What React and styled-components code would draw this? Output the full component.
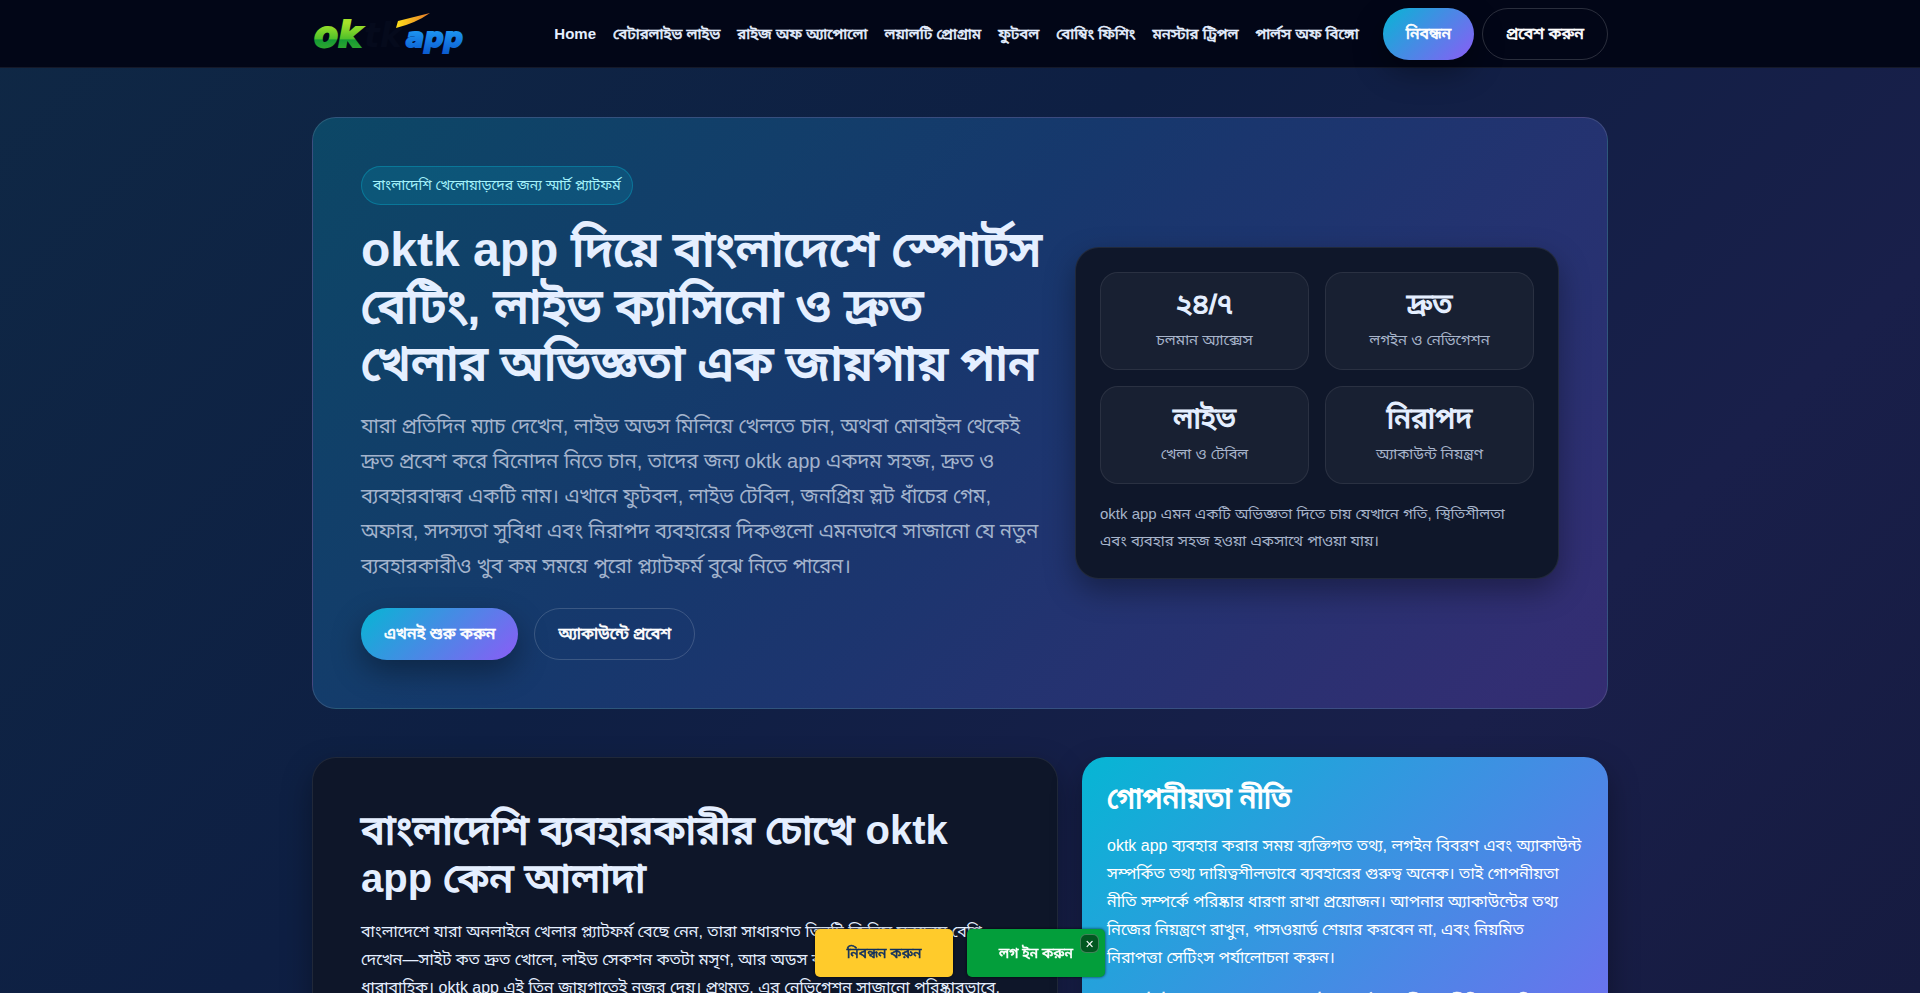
import React, { useState } from 'react'
import styled, { createGlobalStyle, css } from 'styled-components'

const NAV = [
  'বেটারলাইভ লাইভ', 'রাইজ অফ অ্যাপোলো', 'লয়ালটি প্রোগ্রাম',
  'ফুটবল', 'বোম্বিং ফিশিং', 'মনস্টার ট্রিপল', 'পার্লস অফ বিঙ্গো',
]

const STATS = [
  { value: '২৪/৭', label: 'চলমান অ্যাক্সেস' },
  { value: 'দ্রুত', label: 'লগইন ও নেভিগেশন' },
  { value: 'লাইভ', label: 'খেলা ও টেবিল' },
  { value: 'নিরাপদ', label: 'অ্যাকাউন্ট নিয়ন্ত্রণ' },
]

const Logo = () => (
  <svg width="160" height="48" viewBox="0 0 160 48" role="img" aria-label="oktk app">
    <defs>
      <linearGradient id="green" x1="0" y1="0" x2="0" y2="1">
        <stop offset="0.2" stopColor="#a6e32a" />
        <stop offset="0.6" stopColor="#4fc02a" />
        <stop offset="0.62" stopColor="#159a35" />
        <stop offset="1" stopColor="#3fae2a" />
      </linearGradient>
      <linearGradient id="blue" x1="0" y1="0" x2="0" y2="1">
        <stop offset="0.2" stopColor="#1f9bf5" />
        <stop offset="1" stopColor="#0b5cd0" />
      </linearGradient>
      <linearGradient id="gold" x1="0" y1="0" x2="1" y2="0">
        <stop offset="0" stopColor="#ffe11a" />
        <stop offset="1" stopColor="#e8792a" />
      </linearGradient>
    </defs>
    <g fontFamily="'DejaVu Sans', Verdana, sans-serif" fontWeight="bold" fontStyle="italic">
      <text x="2" y="37" fontSize="35" fill="url(#green)" stroke="url(#green)" strokeWidth="2">ok</text>
      <text x="52" y="37" fontSize="33" fill="#050a1c">tk</text>
      <text x="94" y="37" fontSize="27" fill="url(#blue)" stroke="url(#blue)" strokeWidth="2">app</text>
    </g>
    <path d="M86 11 L118 3 Q104 13 84 18 Z" fill="url(#gold)" />
  </svg>
)

const App = () => {
  const [showFloat, setShowFloat] = useState(true)

  return (
    <>
      <GlobalStyle />
      <Header>
        <HeaderInner>
          <LogoLink href="/"><Logo /></LogoLink>
          <Nav>
            <a href="/"><Latin>Home</Latin></a>
            {NAV.map((item) => <a key={item} href="#">{item}</a>)}
          </Nav>
          <HeaderButtons>
            <Button href="#register" $primary>নিবন্ধন</Button>
            <Button href="#login">প্রবেশ করুন</Button>
          </HeaderButtons>
        </HeaderInner>
      </Header>

      <Main>
        <Hero>
          <div>
            <Badge>বাংলাদেশি খেলোয়াড়দের জন্য স্মার্ট প্ল্যাটফর্ম</Badge>
            <HeroTitle><Latin>oktk app</Latin> দিয়ে বাংলাদেশে স্পোর্টস বেটিং, লাইভ ক্যাসিনো ও দ্রুত খেলার অভিজ্ঞতা এক জায়গায় পান</HeroTitle>
            <HeroText>
              যারা প্রতিদিন ম্যাচ দেখেন, লাইভ অডস মিলিয়ে খেলতে চান, অথবা মোবাইল থেকেই দ্রুত প্রবেশ করে বিনোদন নিতে চান, তাদের জন্য oktk app একদম সহজ, দ্রুত ও ব্যবহারবান্ধব একটি নাম। এখানে ফুটবল, লাইভ টেবিল, জনপ্রিয় স্লট ধাঁচের গেম, অফার, সদস্যতা সুবিধা এবং নিরাপদ ব্যবহারের দিকগুলো এমনভাবে সাজানো যে নতুন ব্যবহারকারীও খুব কম সময়ে পুরো প্ল্যাটফর্ম বুঝে নিতে পারেন।
            </HeroText>
            <HeroButtons>
              <Button href="#register" $primary>এখনই শুরু করুন</Button>
              <Button href="#login">অ্যাকাউন্টে প্রবেশ</Button>
            </HeroButtons>
          </div>
          <Panel>
            <StatGrid>
              {STATS.map((s) => (
                <Stat key={s.label}>
                  <strong>{s.value}</strong>
                  <span>{s.label}</span>
                </Stat>
              ))}
            </StatGrid>
            <p>oktk app এমন একটি অভিজ্ঞতা দিতে চায় যেখানে গতি, স্থিতিশীলতা এবং ব্যবহার সহজ হওয়া একসাথে পাওয়া যায়।</p>
          </Panel>
        </Hero>

        <Columns>
          <Article>
            <h2>বাংলাদেশি ব্যবহারকারীর চোখে <Latin>oktk app</Latin> কেন আলাদা</h2>
            <p>
              বাংলাদেশে যারা অনলাইনে খেলার প্ল্যাটফর্ম বেছে নেন, তারা সাধারণত তিনটি জিনিস সবচেয়ে বেশি দেখেন—সাইট কত দ্রুত খোলে, লাইভ সেকশন কতটা মসৃণ, আর অডস বা গেমের তথ্য কতটা ধারাবাহিক। oktk app এই তিন জায়গাতেই নজর দেয়। প্রথমত, এর নেভিগেশন সাজানো পরিষ্কারভাবে, তাই নতুন ব্যবহারকারীও সহজে পথ খুঁজে পান।
            </p>
          </Article>
          <Privacy>
            <h3>গোপনীয়তা নীতি</h3>
            <p>
              oktk app ব্যবহার করার সময় ব্যক্তিগত তথ্য, লগইন বিবরণ এবং অ্যাকাউন্ট সম্পর্কিত তথ্য দায়িত্বশীলভাবে ব্যবহারের গুরুত্ব অনেক। তাই গোপনীয়তা নীতি সম্পর্কে পরিষ্কার ধারণা রাখা প্রয়োজন। আপনার অ্যাকাউন্টের তথ্য নিজের নিয়ন্ত্রণে রাখুন, পাসওয়ার্ড শেয়ার করবেন না, এবং নিয়মিত নিরাপত্তা সেটিংস পর্যালোচনা করুন।
            </p>
            <p>
              <a href="#privacy">অ্যাকাউন্ট ব্যবহারের আগে অবশ্যই সম্পূর্ণ গোপনীয়তা নীতি পড়ে নিন</a>
            </p>
          </Privacy>
        </Columns>
      </Main>

      {showFloat &&
        <FloatBar>
          <FloatLink href="#register" $bg="#ffcb2b" $color="#10305e">নিবন্ধন করুন</FloatLink>
          <FloatLink href="#login" $bg="#039e3b" $color="#fff">লগ ইন করুন</FloatLink>
          <Close type="button" aria-label="বন্ধ করুন" onClick={() => setShowFloat(false)}>✕</Close>
        </FloatBar>}
    </>
  )
}

export default App

// Bengali headings are the regular cut thickened by a stroke, Latin words use the real bold
const bengaliBold = css`
  font-weight: 400;
  -webkit-text-stroke: 0.04em currentColor;
`

const GlobalStyle = createGlobalStyle`
  * {
    box-sizing: border-box;
  }
  body {
    margin: 0;
    overflow: hidden;
    height: 100vh;
    font-family: "Liberation Sans", Arial, "Noto Sans Bengali UI", "Noto Sans Bengali", sans-serif;
    font-size: 16px;
    line-height: 28px;
    color: #e5efff;
    background: linear-gradient(135deg, #0f2845, #0e1f43 42%, #191f4a 75%, #161b40);
  }
  h1, h2, h3, p {
    margin: 0;
  }
  h1, h2, h3, strong {
    ${bengaliBold}
  }
  a {
    color: inherit;
    text-decoration: none;
  }
`

const Latin = styled.span`
  font-weight: bold;
  -webkit-text-stroke: 0;
`

const Header = styled.header`
  position: relative;
  background: #020617;
  border-bottom: 1px solid rgba(255, 255, 255, 0.08);
`

const HeaderInner = styled.div`
  display: flex;
  align-items: center;
  max-width: 1296px;
  height: 67px;
  margin: 0 auto;
`

const LogoLink = styled.a`
  display: flex;
`

const Nav = styled.nav`
  display: flex;
  gap: 17px;
  margin-left: auto;
  font-size: 15px;
  ${bengaliBold}
  white-space: nowrap;
`

const HeaderButtons = styled.div`
  display: flex;
  gap: 8px;
  margin-left: 24px;
`

const Button = styled.a`
  padding: ${({ $primary }) => $primary ? '12px 23px' : '11px 23px'};
  border: ${({ $primary }) => $primary ? '0' : '1px solid rgba(255, 255, 255, 0.16)'};
  border-radius: 26px;
  background: ${({ $primary }) => $primary ? 'linear-gradient(135deg, #06b6d4, #8b5cf6)' : 'transparent'};
  box-shadow: ${({ $primary }) => $primary ? '0 12px 30px rgba(0, 0, 0, 0.35)' : 'none'};
  color: #fff;
  ${bengaliBold}
  white-space: nowrap;
`

const Main = styled.main`
  display: flex;
  flex-direction: column;
  gap: 48px;
  max-width: 1296px;
  margin: 0 auto;
  padding-top: 49px;
`

const Hero = styled.section`
  display: grid;
  grid-template-columns: minmax(0, 1fr) 484px;
  gap: 32px;
  align-items: center;
  padding: 48px;
  border: 1px solid rgba(255, 255, 255, 0.12);
  border-radius: 24px;
  background: linear-gradient(135deg, rgba(6, 182, 212, 0.24), rgba(59, 130, 246, 0.24), rgba(139, 92, 246, 0.24));
`

const Badge = styled.span`
  display: inline-block;
  padding: 6px 11px;
  border: 1px solid rgba(6, 182, 212, 0.35);
  border-radius: 20px;
  background: rgba(6, 182, 212, 0.16);
  color: #a5f3fc;
  font-size: 14px;
  line-height: 25px;
`

const HeroTitle = styled.h1`
  margin-top: 16px;
  font-size: 48px;
  line-height: 57px;
`

const HeroText = styled.p`
  margin-top: 17px;
  color: #a3b3cc;
  font-size: 20px;
  line-height: 35px;
`

const HeroButtons = styled.div`
  display: flex;
  gap: 16px;
  margin-top: 24px;
`

const Panel = styled.div`
  padding: 24px;
  border: 1px solid rgba(255, 255, 255, 0.08);
  border-radius: 24px;
  background: #0f172a;
  box-shadow: 0 12px 30px rgba(0, 0, 0, 0.35);

  & p {
    margin-top: 16px;
    color: #a8b5cb;
    font-size: 15px;
    line-height: 27px;
  }
`

const StatGrid = styled.div`
  display: grid;
  grid-template-columns: 1fr 1fr;
  gap: 16px;
`

const Stat = styled.div`
  display: flex;
  flex-direction: column;
  gap: 6px;
  padding: 16px;
  border: 1px solid rgba(255, 255, 255, 0.08);
  border-radius: 18px;
  background: rgba(255, 255, 255, 0.04);
  text-align: center;

  & strong {
    font-size: 28px;
    line-height: 32px;
  }

  & span {
    color: #a8b5cb;
    font-size: 15px;
    line-height: 26px;
  }
`

const Columns = styled.div`
  display: grid;
  grid-template-columns: repeat(12, 1fr);
  gap: 24px;
`

const Article = styled.article`
  grid-column: span 7;
  min-height: 500px;
  padding: 48px;
  border: 1px solid rgba(255, 255, 255, 0.08);
  border-radius: 24px;
  background: #0e1629;
  box-shadow: 0 12px 30px rgba(0, 0, 0, 0.35);

  & h2 {
    margin-bottom: 16px;
    font-size: 40px;
    line-height: 48px;
  }
`

const Privacy = styled.aside`
  grid-column: span 5;
  padding: 25px;
  border-radius: 24px;
  background: linear-gradient(135deg, #06b6d4, #8b5cf6);
  box-shadow: 0 12px 30px rgba(0, 0, 0, 0.35);
  color: #fff;

  & h3 {
    margin-bottom: 17px;
    font-size: 28px;
    line-height: 33px;
  }

  & p {
    margin-bottom: 16px;
  }

  & a {
    ${bengaliBold}
  }
`

const FloatBar = styled.div`
  position: fixed;
  left: 50%;
  bottom: 16px;
  display: flex;
  gap: 14px;
  transform: translateX(-50%);
`

const FloatLink = styled.a`
  width: 138px;
  border-radius: 5px;
  background: ${({ $bg }) => $bg};
  box-shadow: 0 0 3px rgba(0, 0, 0, 0.7);
  color: ${({ $color }) => $color};
  font-size: 14px;
  ${bengaliBold}
  line-height: 48px;
  text-align: center;
`

const Close = styled.button`
  position: absolute;
  top: 5px;
  right: 6px;
  width: 19px;
  height: 19px;
  padding: 0;
  border: 1px solid rgba(255, 255, 255, 0.25);
  border-radius: 6px;
  background: rgba(0, 0, 0, 0.45);
  color: #fff;
  font-size: 11px;
  line-height: 16px;
  cursor: pointer;
`
